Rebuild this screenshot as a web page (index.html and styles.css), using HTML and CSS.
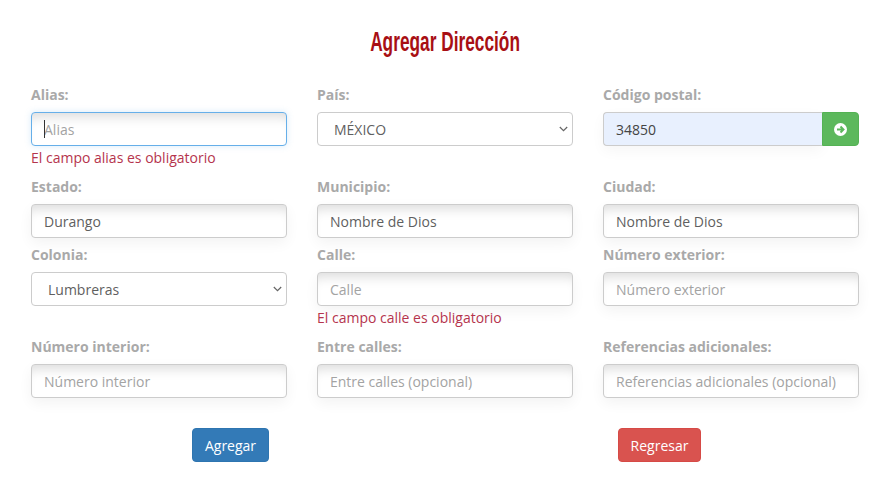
FILE: index.html
```html
<!DOCTYPE html>
<html lang="es">
<head>
    <meta charset="UTF-8">
    <title>Agregar Dirección</title>
    <link rel="stylesheet" href="styles.css">
</head>
<body>
    <div class="container">
        <h1 class="title"><span>Agregar Dirección</span></h1>
        <form class="form-grid">
            <div class="field">
                <label for="alias">Alias:</label>
                <div class="caret-wrap">
                    <input class="control focused" id="alias" type="text" placeholder="Alias">
                    <span class="caret"></span>
                </div>
                <span class="error">El campo alias es obligatorio</span>
            </div>
            <div class="field">
                <label for="pais">País:</label>
                <select class="control plain" id="pais"><option>MÉXICO</option></select>
            </div>
            <div class="field">
                <label for="cp">Código postal:</label>
                <div class="input-group">
                    <input class="control autofilled" id="cp" type="text" value="34850">
                    <button class="go-btn" type="button" aria-label="Buscar">
                        <svg viewBox="0 0 24 24" width="13" height="13">
                            <circle cx="12" cy="12" r="12" fill="#fff"/>
                            <path d="M5.5 12h11M12 6.5l5.5 5.5-5.5 5.5" fill="none" stroke="#5cb85c" stroke-width="3.6"/>
                        </svg>
                    </button>
                </div>
            </div>

            <div class="field">
                <label for="estado">Estado:</label>
                <input class="control" id="estado" type="text" value="Durango">
            </div>
            <div class="field">
                <label for="municipio">Municipio:</label>
                <input class="control" id="municipio" type="text" value="Nombre de Dios">
            </div>
            <div class="field">
                <label for="ciudad">Ciudad:</label>
                <input class="control" id="ciudad" type="text" value="Nombre de Dios">
            </div>

            <div class="field">
                <label for="colonia">Colonia:</label>
                <select class="control plain" id="colonia"><option>Lumbreras</option></select>
            </div>
            <div class="field">
                <label for="calle">Calle:</label>
                <input class="control" id="calle" type="text" placeholder="Calle">
                <span class="error">El campo calle es obligatorio</span>
            </div>
            <div class="field">
                <label for="exterior">Número exterior:</label>
                <input class="control" id="exterior" type="text" placeholder="Número exterior">
            </div>

            <div class="field">
                <label for="interior">Número interior:</label>
                <input class="control" id="interior" type="text" placeholder="Número interior">
            </div>
            <div class="field">
                <label for="entre">Entre calles:</label>
                <input class="control" id="entre" type="text" placeholder="Entre calles (opcional)">
            </div>
            <div class="field">
                <label for="referencias">Referencias adicionales:</label>
                <input class="control" id="referencias" type="text" placeholder="Referencias adicionales (opcional)">
            </div>
        </form>
        <div class="actions">
            <div class="action"><button class="btn btn-blue" type="button">Agregar</button></div>
            <div class="action"><button class="btn btn-red" type="button">Regresar</button></div>
        </div>
    </div>
</body>
</html>
```

FILE: styles.css
```css
* {
    box-sizing: border-box;
}
body {
    margin: 0;
    background-color: #fff;
    font-family: "Open Sans", Arial, sans-serif;
    font-size: 14px;
    color: #555;
}
.container {
    padding: 0 14px 0 16px;
}
.title {
    margin: 0;
    padding-top: 26px;
    height: 78px;
    text-align: center;
    font-family: "Liberation Sans", Arial, sans-serif;
    font-size: 27px;
    line-height: 32px;
    font-weight: 700;
    color: #a80f14;
}
.title span {
    display: inline-block;
    transform: scaleX(0.64); /* no condensed family installed */
}
.form-grid {
    display: grid;
    grid-template-columns: repeat(3, 256px);
    column-gap: 30px;
    padding-left: 15px;
}
.field {
    display: flex;
    flex-direction: column;
}
.field label {
    height: 34px;
    padding-top: 8px;
    line-height: 18px;
    font-weight: 700;
    color: #a9a9a9;
}
.control {
    width: 100%;
    height: 34px;
    padding: 6px 12px;
    border: 1px solid #ccc;
    border-radius: 4px;
    background-color: #fff;
    font-family: inherit;
    font-size: 14px;
    color: #5f5f5f;
    outline: none;
    box-shadow: inset 0 12px 12px -8px rgba(0, 0, 0, 0.14), 0 5px 14px rgba(0, 0, 0, 0.05);
}
.control::placeholder {
    color: #a3a3a3;
    opacity: 1;
}
select.control {
    appearance: none;
    padding-left: 16px;
    background-image: url("data:image/svg+xml,%3Csvg xmlns='http://www.w3.org/2000/svg' width='9' height='6'%3E%3Cpath d='M.8 1l3.7 3.7L8.2 1' fill='none' stroke='%23666' stroke-width='1.2'/%3E%3C/svg%3E");
    background-repeat: no-repeat;
    background-position: right 4px center;
}
.plain {
    box-shadow: none;
}
.focused {
    border-color: #66afe9;
    box-shadow: inset 0 12px 12px -8px rgba(0, 0, 0, 0.14), 0 0 6px rgba(102, 175, 233, 0.25);
}
.caret-wrap {
    position: relative;
}
.caret {
    position: absolute;
    left: 13px;
    top: 8px;
    width: 1px;
    height: 18px;
    background-color: #333;
}
.autofilled {
    background-color: #e8f0fe;
    color: #444;
    border-radius: 4px 0 0 4px;
    border-right: 0;
    box-shadow: 0 5px 14px rgba(0, 0, 0, 0.04);
}
.input-group {
    display: flex;
}
.go-btn {
    flex: 0 0 37px;
    height: 34px;
    padding: 0;
    display: flex;
    align-items: center;
    justify-content: center;
    background-color: #5cb85c;
    border: 1px solid #54b254;
    border-radius: 0 4px 4px 0;
}
.error {
    height: 24px;
    line-height: 24px;
    color: #b5344d;
}
.actions {
    display: grid;
    grid-template-columns: 429px 429px;
    padding-top: 30px;
}
.action {
    text-align: center;
}
.btn {
    height: 34px;
    padding: 6px 12px;
    border: 1px solid transparent;
    border-radius: 4px;
    font-family: inherit;
    font-size: 14px;
    color: #fff;
}
.btn-blue {
    background-color: #337ab7;
    border-color: #2e75b0;
}
.btn-red {
    background-color: #d9534f;
    border-color: #d64a46;
}
```
